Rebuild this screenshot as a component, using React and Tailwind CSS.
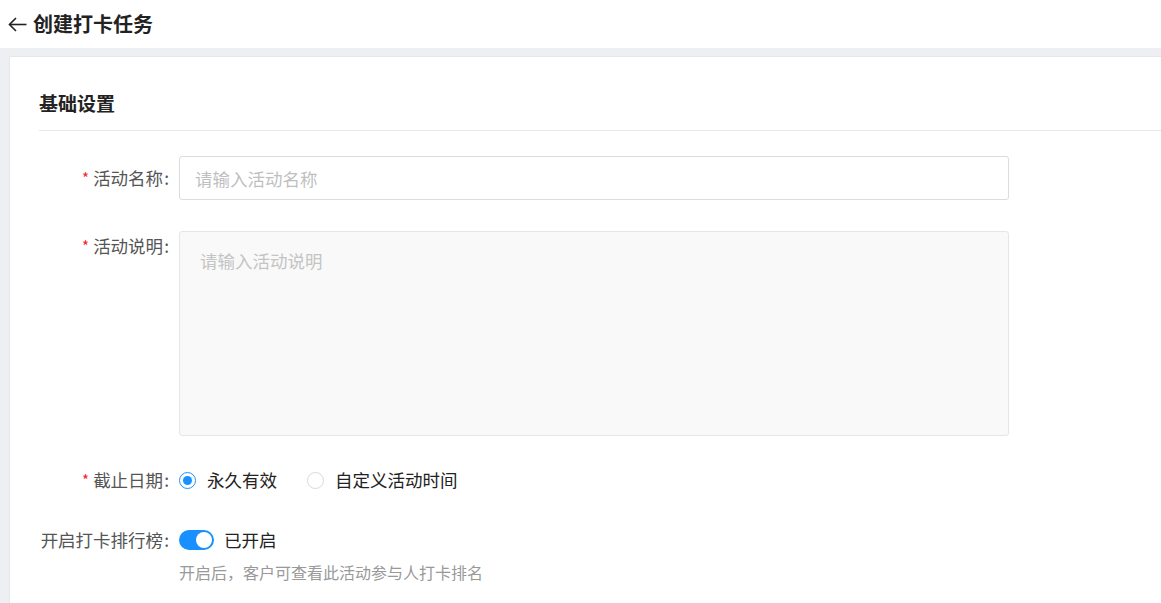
import React, { useState } from "react";

const font = { fontFamily: '"Noto Sans CJK SC", "Noto Sans", sans-serif' };

const Label = ({ required, children, className = "" }) => (
  <div className={`w-[140px] shrink-0 pr-[10px] flex justify-end whitespace-nowrap text-[17.5px] text-[#555] ${className}`}>
    {required && <span className="text-[#f5222d] mr-[4px] text-[15px]">*</span>}
    <span>
      {children}
      <span className="ml-[1px]">:</span>
    </span>
  </div>
);

const Radio = ({ checked, label, onClick }) => (
  <button type="button" onClick={onClick} className="flex items-center">
    <span
      className={`w-[17px] h-[17px] rounded-full border flex items-center justify-center bg-white ${
        checked ? "border-[#1890ff]" : "border-[#d9d9d9]"
      }`}
    >
      {checked && <span className="w-[9px] h-[9px] rounded-full bg-[#1890ff]" />}
    </span>
    <span className="ml-[11px] text-[17.5px] text-[#222]">{label}</span>
  </button>
);

export default function App() {
  const [deadline, setDeadline] = useState("forever");
  const [rank, setRank] = useState(true);

  return (
    <div className="min-h-screen bg-[#eeeff3] flex flex-col" style={font}>
      <div className="h-12 bg-white flex items-center pl-[8px]">
        <svg width="19" height="15" viewBox="0 0 19 15" fill="none" stroke="#222" strokeWidth="1.6">
          <path d="M18.5 7.5H1.5" />
          <path d="M8 1L1.5 7.5 8 14" />
        </svg>
        <span className="ml-[6px] text-[20px] font-bold text-[#222] leading-none">创建打卡任务</span>
      </div>

      <div className="flex-1 pl-[9px] pt-[8px]">
        <div className="h-full bg-white border-t border-l border-[#e6e7eb] pl-[29px] pb-10">
          <div className="h-[74px] flex items-end pb-[15px] border-b border-[#e8e8e8]">
            <span className="text-[19px] font-bold text-[#222] leading-[24px]">基础设置</span>
          </div>

          <div className="mt-[25px] flex">
            <Label required className="h-[44px] items-center">活动名称</Label>
            <input
              className="w-[830px] h-[44px] border border-[#dcdcdc] rounded-[3px] px-[15px] text-[17.5px] placeholder:text-[#bfbfbf] outline-none"
              placeholder="请输入活动名称"
            />
          </div>

          <div className="mt-[31px] flex">
            <Label required className="leading-[30px] items-start">活动说明</Label>
            <textarea
              className="w-[830px] h-[205px] bg-[#f9f9f9] border border-[#e6e6e6] rounded-[3px] px-[20px] py-[16px] text-[17.5px] placeholder:text-[#c4c4c4] outline-none resize-none"
              placeholder="请输入活动说明"
            />
          </div>

          <div className="mt-[22px] flex h-[44px] items-center">
            <Label required className="items-center">截止日期</Label>
            <div className="flex items-center gap-[30px]">
              <Radio checked={deadline === "forever"} label="永久有效" onClick={() => setDeadline("forever")} />
              <Radio checked={deadline === "custom"} label="自定义活动时间" onClick={() => setDeadline("custom")} />
            </div>
          </div>

          <div className="mt-[16px] flex h-[44px] items-center">
            <Label className="items-center">开启打卡排行榜</Label>
            <button
              type="button"
              onClick={() => setRank(!rank)}
              className={`w-[35px] h-[20px] rounded-full flex items-center px-[2px] ${
                rank ? "bg-[#1890ff] justify-end" : "bg-[#bfbfbf] justify-start"
              }`}
            >
              <span className="w-[16px] h-[16px] rounded-full bg-white" />
            </button>
            <span className="ml-[10px] text-[17.5px] text-[#222]">{rank ? "已开启" : "已关闭"}</span>
          </div>
          <div className="pl-[140px] text-[16px] leading-[20px] text-[#999]">
            开启后，客户可查看此活动参与人打卡排名
          </div>
        </div>
      </div>
    </div>
  );
}
